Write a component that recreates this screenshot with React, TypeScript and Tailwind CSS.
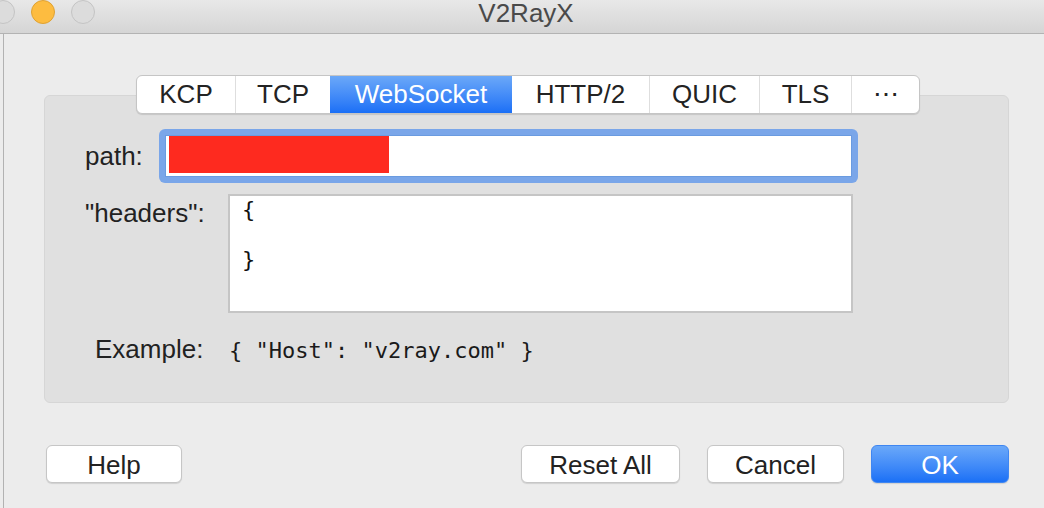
import React from "react";

const segs: { label: string; w: string; active?: boolean }[] = [
  { label: "KCP", w: "w-[98px]" },
  { label: "TCP", w: "w-[95px]" },
  { label: "WebSocket", w: "w-[182px]", active: true },
  { label: "HTTP/2", w: "w-[137px]" },
  { label: "QUIC", w: "w-[110px]" },
  { label: "TLS", w: "w-[92px]" },
  { label: "\u22EF", w: "w-[68px]" },
];

export default function App() {
  return (
    <div
      className="w-[1044px] h-[508px] bg-[#ececec] flex flex-col overflow-hidden text-[#222222]"
      style={{ fontFamily: '"Liberation Sans", Arial, sans-serif' }}
    >
      {/* Title bar */}
      <div className="h-[34px] shrink-0 bg-gradient-to-b from-[#e8e8e8] to-[#d5d5d5] border-b border-[#b3b3b3] grid grid-cols-[1fr_auto_1fr]">
        <div className="flex items-start gap-[16px] -ml-[9px]">
          <div className="w-[24px] h-[24px] rounded-full bg-[#dcdcdc] border border-[#c4c4c4]" />
          <div className="w-[24px] h-[24px] rounded-full bg-[#fdbc40] border border-[#dfa233]" />
          <div className="w-[24px] h-[24px] rounded-full bg-[#dcdcdc] border border-[#c4c4c4]" />
        </div>
        <div className="text-[26px] leading-[22px] text-[#4a4a4a] pt-[2px] pl-[8px]">V2RayX</div>
        <div />
      </div>

      {/* Content */}
      <div className="flex-1 ml-[3px] border-l border-[#b2b2b2] pl-[40px] pr-[35px] pt-[41px] flex flex-col">
        {/* Segmented control */}
        <div className="flex justify-center pl-[3px] relative z-10">
          <div className="flex h-[39px] bg-white border border-[#c5c5c5] rounded-[6px] shadow-[0_1px_1px_rgba(0,0,0,0.12)] overflow-hidden">
            {segs.map((s, i) =>
              s.active ? (
                <div
                  key={s.label}
                  className={`${s.w} flex items-center justify-center text-[26px] text-white bg-gradient-to-b from-[#6ba8f8] to-[#1a6ff6]`}
                >
                  {s.label}
                </div>
              ) : (
                <div
                  key={s.label}
                  className={`${s.w} flex items-center justify-center text-[26px] text-[#232323] ${
                    i > 0 && !segs[i - 1].active ? "border-l border-[#dedede]" : ""
                  }`}
                >
                  {s.label}
                </div>
              )
            )}
          </div>
        </div>

        {/* Group box */}
        <div className="-mt-[19px] h-[308px] bg-[#e0e0e0] border border-[#d6d6d6] rounded-[6px] pt-[33px] pl-[40px] flex flex-col">
          {/* path row */}
          <div className="flex items-center">
            <div className="w-[74px] text-[26px] leading-[30px]">path:</div>
            <div className="w-[699px] h-[54px] rounded-[6px] bg-[#7aa6e9] p-[6px]">
              <div className="w-full h-full bg-white border border-[#6a9be0] pl-[3px] flex items-start">
                <div className="w-[220px] h-[37px] bg-[#fe2a1f]" />
              </div>
            </div>
          </div>

          {/* headers row */}
          <div className="flex items-start mt-[11px]">
            <div className="w-[143px] text-[26px] leading-[30px] mt-[4px]">"headers":</div>
            <div
              className="w-[625px] h-[119px] bg-white border-2 border-[#c5c5c5] pl-[12px] pt-[1px] text-[22px] leading-[25px] text-[#111] whitespace-pre"
              style={{ fontFamily: '"DejaVu Sans Mono", monospace' }}
            >
              {"{\n\n}"}
            </div>
          </div>

          {/* example row */}
          <div className="flex items-baseline mt-[21px] ml-[10px]">
            <div className="w-[134px] text-[26px] leading-[30px]">Example:</div>
            <div
              className="text-[22px] leading-[30px] text-[#1a1a1a] whitespace-pre"
              style={{ fontFamily: '"DejaVu Sans Mono", monospace' }}
            >
              {'{ "Host": "v2ray.com" }'}
            </div>
          </div>
        </div>

        {/* Buttons */}
        <div className="flex items-center mt-[42px] pl-[2px]">
          <button className="w-[136px] h-[38px] bg-white border border-[#c6c6c6] rounded-[6px] shadow-[0_1px_1px_rgba(0,0,0,0.12)] text-[26px] text-[#222]">
            Help
          </button>
          <div className="flex-1" />
          <div className="flex gap-[27px]">
            <button className="w-[159px] h-[38px] bg-white border border-[#c6c6c6] rounded-[6px] shadow-[0_1px_1px_rgba(0,0,0,0.12)] text-[26px] text-[#222]">
              Reset All
            </button>
            <button className="w-[137px] h-[38px] bg-white border border-[#c6c6c6] rounded-[6px] shadow-[0_1px_1px_rgba(0,0,0,0.12)] text-[26px] text-[#222]">
              Cancel
            </button>
            <button className="w-[138px] h-[38px] rounded-[6px] border border-[#3f86f1] bg-gradient-to-b from-[#6aa8f9] to-[#1a70f6] shadow-[0_1px_1px_rgba(0,0,0,0.12)] text-[26px] text-white">
              OK
            </button>
          </div>
        </div>
      </div>
    </div>
  );
}
